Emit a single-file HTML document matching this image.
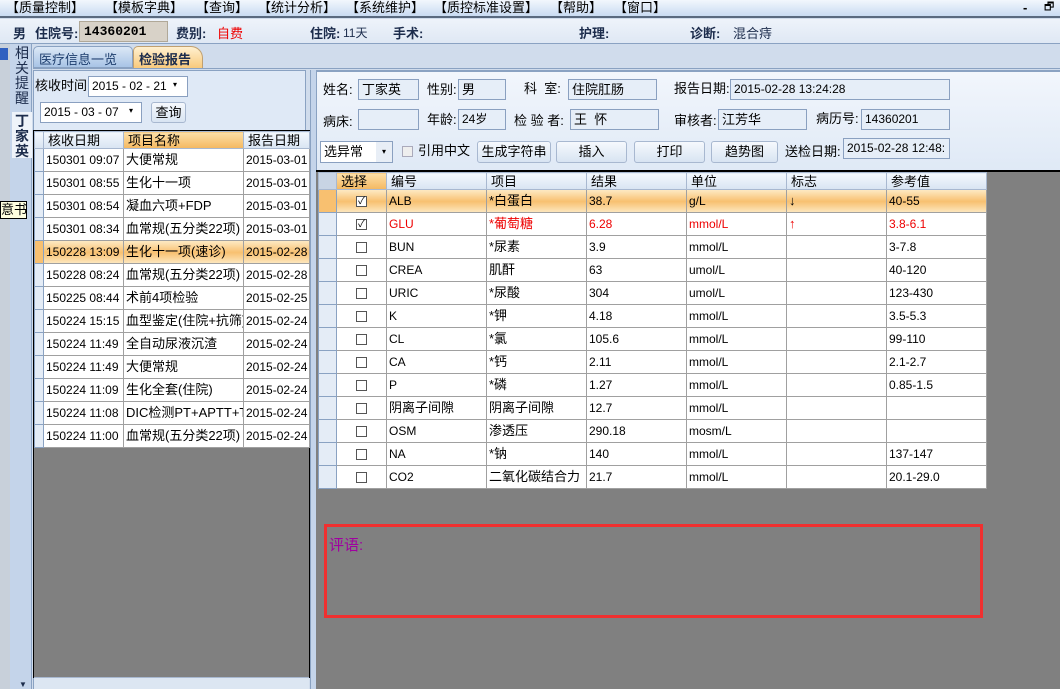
<!DOCTYPE html><html><head><meta charset="utf-8"><style>
*{margin:0;padding:0;box-sizing:border-box}
body{width:1060px;height:689px;overflow:hidden;position:relative;background:#d0dcec;font-family:"Liberation Sans","Noto Sans CJK SC","WenQuanYi Zen Hei",sans-serif;font-size:12px;color:#000}
.a{position:absolute}
.menu{left:0;top:0;width:1060px;height:18px;background:linear-gradient(#f2f7fd,#c9dbf2);border-bottom:2px solid #5a6a80}
.menu span{position:absolute;top:0;font-size:13px;line-height:15px}
.info{left:0;top:19px;width:1060px;height:25px;background:linear-gradient(#eef3fa,#dfe8f4);border-bottom:1px solid #8aa2c2}
.info b{position:absolute;top:4px;font-size:13px;color:#1c2c4c}
.inp{position:absolute;border:1px solid #8aa0c0;background:#e6eef8;font-size:12px;padding:1px 3px;line-height:17px;white-space:nowrap;overflow:hidden}
.btn{position:absolute;border:1px solid #a8b8d0;border-radius:3px;background:linear-gradient(#f6f9fd,#d8e4f2);text-align:center;font-size:13px;line-height:20px}
table{border-collapse:collapse;table-layout:fixed;position:absolute;background:#fff}
td{border:1px solid #a0a0a0;height:23px;line-height:20px;padding:0 2px;white-space:nowrap;overflow:hidden;font-size:13px;vertical-align:middle}
th{height:17px;line-height:15px;font-weight:normal;text-align:left;padding:0 4px;border:1px solid #a8b8d0;background:linear-gradient(#f4f8fd,#d8e4f2);font-size:13px;overflow:hidden;white-space:nowrap}
td.rs{background:#e4ecf6;border-color:#8aa2c2}
.m{font-size:12px}
.sel td{background:linear-gradient(#fde8c0,#f8c070,#fde8c0)}
.red td{color:#e00}
.cb{display:inline-block;width:11px;height:11px;border:1px solid #555;background:#fff;vertical-align:middle;font-size:10px;line-height:9px;text-align:center}
.lb{position:absolute;font-size:13px;line-height:16px}
</style></head><body>
<div class="a menu">
<span style="left:6px">【质量控制】</span><span style="left:105px">【模板字典】</span><span style="left:196px">【查询】</span><span style="left:258px">【统计分析】</span><span style="left:346px">【系统维护】</span><span style="left:434px">【质控标准设置】</span><span style="left:550px">【帮助】</span><span style="left:614px">【窗口】</span>
<span style="left:1023px;font-weight:bold">-</span><span style="left:1044px;font-size:11px">🗗</span>
</div>
<div class="a info">
<b style="left:13px">男</b><b style="left:35px">住院号:</b>
<div class="a" style="left:79px;top:2px;width:89px;height:21px;background:#d8d2c8;border:1px solid #b0a898;font-weight:bold;font-size:13px;padding:2px 4px;font-family:'Liberation Mono',monospace">14360201</div>
<b style="left:176px">费别:</b><span class="a" style="left:217px;top:4px;color:#e00;font-size:13px">自费</span>
<b style="left:310px">住院:</b><span class="a" style="left:343px;top:5px;font-size:12px;color:#1c2c4c">11天</span>
<b style="left:393px">手术:</b><b style="left:579px">护理:</b><b style="left:690px">诊断:</b><span class="a" style="left:733px;top:4px;font-size:13px;color:#1c2c4c">混合痔</span>
</div>
<div class="a" style="left:0;top:44px;width:10px;height:645px;background:#c8d0da"></div>
<div class="a" style="left:0;top:48px;width:8px;height:12px;background:#3060c0"></div>
<div class="a" style="left:0;top:201px;width:27px;height:18px;background:#ffffe0;border:1px solid #000;font-size:13px;line-height:16px;white-space:nowrap;overflow:hidden;z-index:3">意书</div>
<div class="a" style="left:10px;top:44px;width:22px;height:645px;background:#c4d4ea;border-right:1px solid #8aa2c2"></div>
<div class="a" style="left:13px;top:46px;width:18px;height:64px;font-size:14px;line-height:15px;color:#1c2c4c;text-align:center">相关提醒</div>
<div class="a" style="left:12px;top:112px;width:20px;height:46px;background:#eef3fa;font-size:14px;line-height:15px;font-weight:bold;color:#1c2c4c;text-align:center;padding-top:2px">丁家英</div>
<div class="a" style="left:19px;top:680px;font-size:8px;color:#1c2c4c">▼</div>
<div class="a" style="left:33px;top:46px;width:100px;height:22px;background:linear-gradient(#dce8f6,#a8c4e6);border:1px solid #8aa2c2;border-radius:5px 5px 0 0;font-size:13px;color:#1c3c6c;padding:2px 5px">医疗信息一览表</div>
<div class="a" style="left:133px;top:46px;width:70px;height:23px;background:linear-gradient(#fff0d0,#f8c878);border:1px solid #c0a070;border-bottom:none;border-radius:5px 12px 0 0;font-size:13px;font-weight:bold;color:#1c2c4c;padding:2px 5px">检验报告</div>
<div class="a" style="left:33px;top:68px;width:1027px;height:1px;background:#8aa2c2"></div>
<div class="a" style="left:33px;top:70px;width:273px;height:619px;background:#dfe9f6;border:1px solid #8aa2c2"></div>
<span class="lb" style="left:35px;top:78px">核收时间</span>
<div class="inp" style="left:88px;top:76px;width:100px;height:21px;background:#fff">2015 - 02 - 21</div>
<div class="a" style="left:173px;top:80px;font-size:8px">▾</div>
<div class="inp" style="left:40px;top:102px;width:102px;height:21px;background:#fff">2015 - 03 - 07</div>
<div class="a" style="left:129px;top:106px;font-size:8px">▾</div>
<div class="btn" style="left:151px;top:102px;width:35px;height:21px">查询</div>
<div class="a" style="left:33px;top:130px;width:277px;height:548px;background:#808080;border:1px solid #000"></div>
<table style="left:34px;top:131px;width:275px">
<colgroup><col style="width:9px"><col style="width:80px"><col style="width:120px"><col style="width:66px"></colgroup>
<tr><th style="padding:0"></th><th>核收日期</th><th style="background:linear-gradient(#fde0a8,#f4b860)">项目名称</th><th>报告日期</th></tr>
<tr><td class="rs"></td><td class="m">150301 09:07</td><td>大便常规</td><td class="m">2015-03-01</td></tr>
<tr><td class="rs"></td><td class="m">150301 08:55</td><td>生化十一项</td><td class="m">2015-03-01</td></tr>
<tr><td class="rs"></td><td class="m">150301 08:54</td><td>凝血六项+FDP</td><td class="m">2015-03-01</td></tr>
<tr><td class="rs"></td><td class="m">150301 08:34</td><td>血常规(五分类22项)</td><td class="m">2015-03-01</td></tr>
<tr class="sel"><td class="rs" style="background:#f8c070"></td><td class="m">150228 13:09</td><td>生化十一项(速诊)</td><td class="m">2015-02-28</td></tr>
<tr><td class="rs"></td><td class="m">150228 08:24</td><td>血常规(五分类22项)</td><td class="m">2015-02-28</td></tr>
<tr><td class="rs"></td><td class="m">150225 08:44</td><td>术前4项检验</td><td class="m">2015-02-25</td></tr>
<tr><td class="rs"></td><td class="m">150224 15:15</td><td>血型鉴定(住院+抗筛)</td><td class="m">2015-02-24</td></tr>
<tr><td class="rs"></td><td class="m">150224 11:49</td><td>全自动尿液沉渣</td><td class="m">2015-02-24</td></tr>
<tr><td class="rs"></td><td class="m">150224 11:49</td><td>大便常规</td><td class="m">2015-02-24</td></tr>
<tr><td class="rs"></td><td class="m">150224 11:09</td><td>生化全套(住院)</td><td class="m">2015-02-24</td></tr>
<tr><td class="rs"></td><td class="m">150224 11:08</td><td>DIC检测PT+APTT+T...</td><td class="m">2015-02-24</td></tr>
<tr><td class="rs"></td><td class="m">150224 11:00</td><td>血常规(五分类22项)</td><td class="m">2015-02-24</td></tr>
</table>
<div class="a" style="left:34px;top:677px;width:275px;height:12px;background:#dce6f2;border-top:1px solid #a8b8d0"></div>
<div class="a" style="left:310px;top:70px;width:6px;height:619px;background:#c4d4ea;border-left:1px solid #8aa2c2"></div>
<div class="a" style="left:316px;top:70px;width:744px;height:101px;background:linear-gradient(#f2f6fc,#dfe9f6);border-top:2px solid #8aa2c2;border-left:1px solid #8aa2c2"></div>
<span class="lb" style="left:323px;top:82px">姓名:</span><div class="inp" style="left:358px;top:79px;width:61px;height:21px;font-size:13px">丁家英</div>
<span class="lb" style="left:427px;top:82px">性别:</span><div class="inp" style="left:458px;top:79px;width:48px;height:21px;font-size:13px">男</div>
<span class="lb" style="left:524px;top:81px">科 &nbsp;室:</span><div class="inp" style="left:568px;top:79px;width:89px;height:21px;font-size:13px">住院肛肠</div>
<span class="lb" style="left:674px;top:81px">报告日期:</span><div class="inp" style="left:730px;top:79px;width:220px;height:21px">2015-02-28 13:24:28</div>
<span class="lb" style="left:323px;top:114px">病床:</span><div class="inp" style="left:358px;top:109px;width:61px;height:21px"></div>
<span class="lb" style="left:427px;top:112px">年龄:</span><div class="inp" style="left:458px;top:109px;width:48px;height:21px">24岁</div>
<span class="lb" style="left:514px;top:113px">检 验 者:</span><div class="inp" style="left:570px;top:109px;width:89px;height:21px;font-size:13px">王 &nbsp;怀</div>
<span class="lb" style="left:674px;top:113px">审核者:</span><div class="inp" style="left:718px;top:109px;width:89px;height:21px;font-size:13px">江芳华</div>
<span class="lb" style="left:816px;top:111px">病历号:</span><div class="inp" style="left:861px;top:109px;width:89px;height:21px">14360201</div>
<div class="inp" style="left:320px;top:141px;width:73px;height:22px;background:#fff;font-size:13px">选异常</div>
<div class="a" style="left:376px;top:142px;width:16px;height:20px;background:#e8eef6;font-size:8px;text-align:center;line-height:20px">▾</div>
<div class="a" style="left:402px;top:146px;width:11px;height:11px;border:1px solid #aab;background:#eee"></div>
<span class="lb" style="left:418px;top:143px">引用中文</span>
<div class="btn" style="left:477px;top:141px;width:74px;height:22px">生成字符串</div>
<div class="btn" style="left:556px;top:141px;width:71px;height:22px">插入</div>
<div class="btn" style="left:634px;top:141px;width:71px;height:22px">打印</div>
<div class="btn" style="left:711px;top:141px;width:67px;height:22px">趋势图</div>
<span class="lb" style="left:785px;top:144px">送检日期:</span><div class="inp" style="left:843px;top:138px;width:107px;height:21px">2015-02-28 12:48:</div>
<div class="a" style="left:316px;top:170px;width:744px;height:519px;background:#808080;border-top:2px solid #000"></div>
<table style="left:318px;top:172px;width:668px">
<colgroup><col style="width:18px"><col style="width:50px"><col style="width:100px"><col style="width:100px"><col style="width:100px"><col style="width:100px"><col style="width:100px"><col style="width:100px"></colgroup>
<tr><th style="padding:0;background:#c8d4e4"></th><th style="background:linear-gradient(#fde0a8,#f4b860)">选择</th><th>编号</th><th>项目</th><th>结果</th><th>单位</th><th>标志</th><th>参考值</th></tr>
<tr class="sel"><td class="rs" style="background:#f8c070"></td><td style="text-align:center"><span class="cb">✓</span></td><td class="m">ALB</td><td>*白蛋白</td><td class="m">38.7</td><td class="m">g/L</td><td>↓</td><td class="m">40-55</td></tr>
<tr class="red"><td class="rs"></td><td style="text-align:center"><span class="cb" style="color:#000">✓</span></td><td class="m">GLU</td><td>*葡萄糖</td><td class="m">6.28</td><td class="m">mmol/L</td><td>↑</td><td class="m">3.8-6.1</td></tr>
<tr><td class="rs"></td><td style="text-align:center"><span class="cb"></span></td><td class="m">BUN</td><td>*尿素</td><td class="m">3.9</td><td class="m">mmol/L</td><td></td><td class="m">3-7.8</td></tr>
<tr><td class="rs"></td><td style="text-align:center"><span class="cb"></span></td><td class="m">CREA</td><td>肌酐</td><td class="m">63</td><td class="m">umol/L</td><td></td><td class="m">40-120</td></tr>
<tr><td class="rs"></td><td style="text-align:center"><span class="cb"></span></td><td class="m">URIC</td><td>*尿酸</td><td class="m">304</td><td class="m">umol/L</td><td></td><td class="m">123-430</td></tr>
<tr><td class="rs"></td><td style="text-align:center"><span class="cb"></span></td><td class="m">K</td><td>*钾</td><td class="m">4.18</td><td class="m">mmol/L</td><td></td><td class="m">3.5-5.3</td></tr>
<tr><td class="rs"></td><td style="text-align:center"><span class="cb"></span></td><td class="m">CL</td><td>*氯</td><td class="m">105.6</td><td class="m">mmol/L</td><td></td><td class="m">99-110</td></tr>
<tr><td class="rs"></td><td style="text-align:center"><span class="cb"></span></td><td class="m">CA</td><td>*钙</td><td class="m">2.11</td><td class="m">mmol/L</td><td></td><td class="m">2.1-2.7</td></tr>
<tr><td class="rs"></td><td style="text-align:center"><span class="cb"></span></td><td class="m">P</td><td>*磷</td><td class="m">1.27</td><td class="m">mmol/L</td><td></td><td class="m">0.85-1.5</td></tr>
<tr><td class="rs"></td><td style="text-align:center"><span class="cb"></span></td><td>阴离子间隙</td><td>阴离子间隙</td><td class="m">12.7</td><td class="m">mmol/L</td><td></td><td></td></tr>
<tr><td class="rs"></td><td style="text-align:center"><span class="cb"></span></td><td class="m">OSM</td><td>渗透压</td><td class="m">290.18</td><td class="m">mosm/L</td><td></td><td></td></tr>
<tr><td class="rs"></td><td style="text-align:center"><span class="cb"></span></td><td class="m">NA</td><td>*钠</td><td class="m">140</td><td class="m">mmol/L</td><td></td><td class="m">137-147</td></tr>
<tr><td class="rs"></td><td style="text-align:center"><span class="cb"></span></td><td class="m">CO2</td><td>二氧化碳结合力</td><td class="m">21.7</td><td class="m">mmol/L</td><td></td><td class="m">20.1-29.0</td></tr>
</table>
<div class="a" style="left:324px;top:524px;width:659px;height:94px;border:3px solid #f03030"></div>
<span class="a" style="left:329px;top:534px;font-size:15px;color:#a000a0">评语:</span>
</body></html>
